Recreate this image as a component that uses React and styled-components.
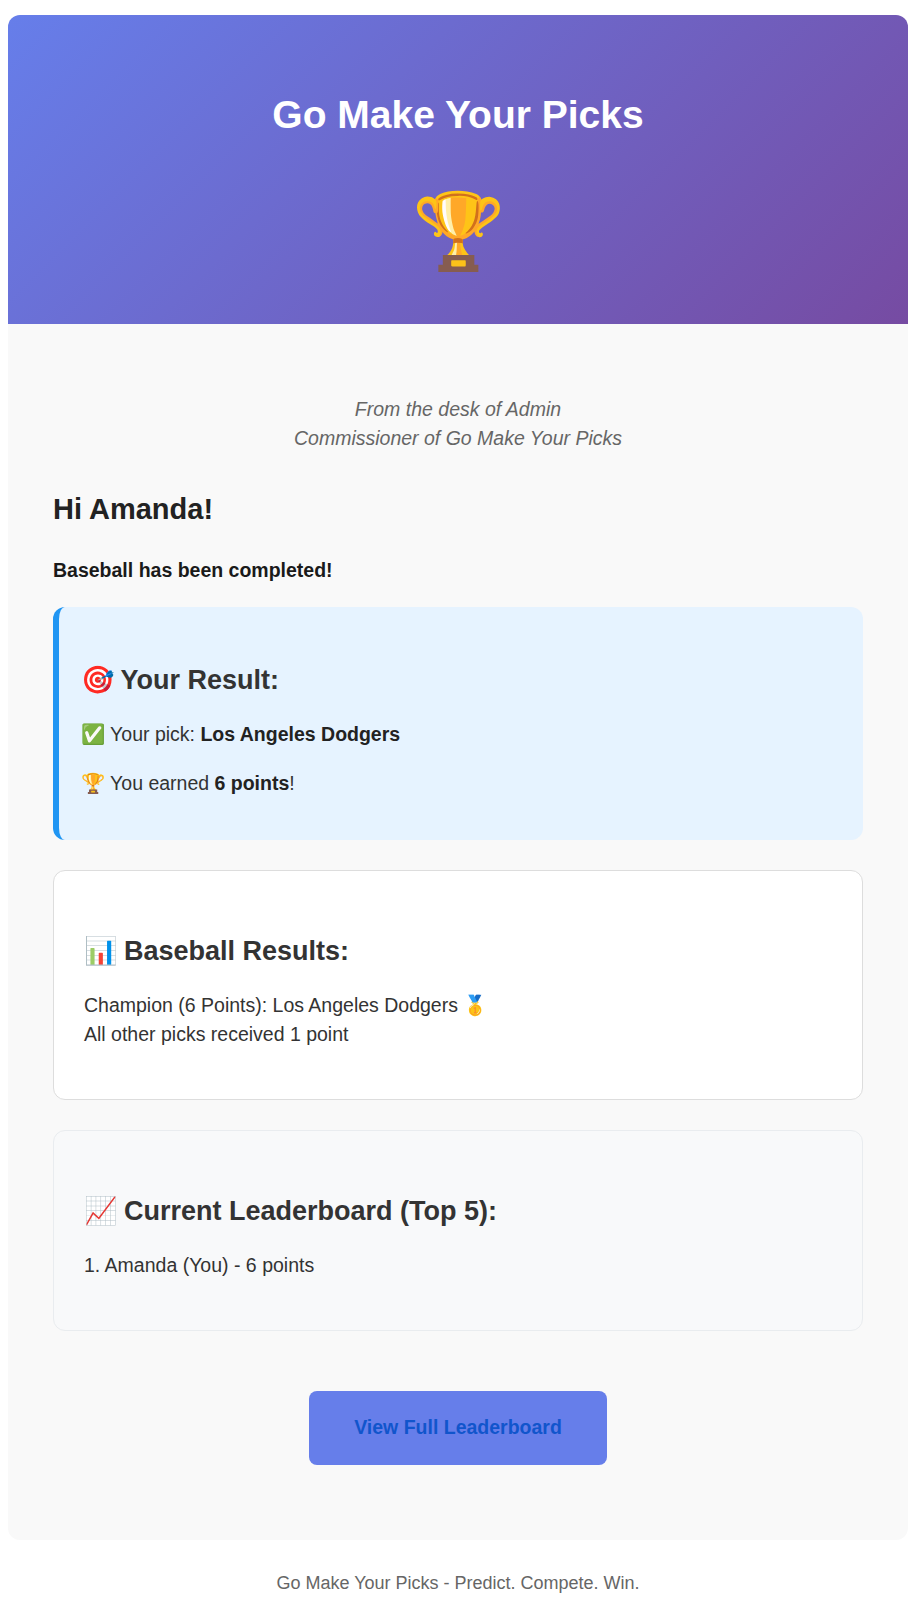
import React from "react";
import styled, { createGlobalStyle } from "styled-components";

const Global = createGlobalStyle`
  html, body { margin: 0; padding: 0; background: #fff; }
  body { font-family: "Liberation Sans", Arial, sans-serif; color: #333; line-height: 1.6; font-size: 19.5px; }
`;
const Page = styled.div`
  width: 900px;
  margin: 0 0 0 8px;
  padding: 15px 0 0;
`;
const Header = styled.header`
  height: 309px;
  box-sizing: border-box;
  padding: 40px 20px;
  border-radius: 12px 12px 0 0;
  background: linear-gradient(135deg, #667eea 0%, #764ba2 100%);
  text-align: center;
  color: #fff;
`;
const Title = styled.h1`
  margin: 36px 0 0;
  font-size: 39px;
  line-height: 47px;
  font-weight: 700;
`;
const Trophy = styled.div`
  margin-top: 48px;
  font-size: 75px;
  line-height: 90px;
`;
const Content = styled.main`
  background: #f9f9f9;
  border-radius: 0 0 12px 12px;
  padding: 71px 45px 75px;
`;
const Desk = styled.p`
  margin: 0 0 33px;
  text-align: center;
  font-style: italic;
  line-height: 29px;
  color: #666;
`;
const Greeting = styled.h2`
  margin: 0 0 22px;
  font-size: 29px;
  line-height: 46px;
  color: #222;
`;
const Lead = styled.p`
  margin: 0 0 21px;
  line-height: 32px;
  font-weight: 700;
  color: #1a1a1a;
`;
const Card = styled.section`
  margin-bottom: 30px;
  border-radius: 12px;
  padding: 30px 30px 50px;
  background: ${(p) => p.$bg};
  border: 1px solid ${(p) => p.$line};
`;
const ResultCard = styled.section`
  margin-bottom: 30px;
  border-radius: 12px;
  padding: 23px 22px 42px;
  background: #e6f3ff;
  border-left: 6px solid #2196f3;
`;
const CardTitle = styled.h3`
  margin: 29px 0 18px;
  font-size: 27px;
  line-height: 43px;
  color: #333;
`;
const TitleEmoji = styled.span`
  margin-right: -1.5px;
`;
const Line = styled.p`
  margin: 0 0 20px;
  line-height: 29px;
  color: #333;
  &:last-child { margin-bottom: 0; }
`;
const Strong = styled.strong`
  color: #222;
`;
const Actions = styled.div`
  margin-top: 60px;
  text-align: center;
`;
const Button = styled.a`
  display: inline-block;
  padding: 20px 45px 22px;
  line-height: 32px;
  background: #667eea;
  border-radius: 8px;
  color: #1155cc;
  font-weight: 700;
  text-decoration: none;
`;
const Footer = styled.footer`
  padding: 29px 0 0;
  text-align: center;
  font-size: 18px;
  color: #666;
`;

export default function App() {
  return (
    <Page>
      <Global />
      <Header>
        <Title>Go Make Your Picks</Title>
        <Trophy>🏆</Trophy>
      </Header>
      <Content>
        <Desk>From the desk of Admin<br />Commissioner of Go Make Your Picks</Desk>
        <Greeting>Hi Amanda!</Greeting>
        <Lead>Baseball has been completed!</Lead>
        <ResultCard>
          <CardTitle><TitleEmoji>🎯</TitleEmoji> Your Result:</CardTitle>
          <Line>✅ Your pick: <Strong>Los Angeles Dodgers</Strong></Line>
          <Line>🏆 You earned <Strong>6 points</Strong>!</Line>
        </ResultCard>
        <Card $bg="#fff" $line="#ddd">
          <CardTitle><TitleEmoji>📊</TitleEmoji> Baseball Results:</CardTitle>
          <Line>Champion (6 Points): Los Angeles Dodgers 🥇<br />All other picks received 1 point</Line>
        </Card>
        <Card $bg="#f8f9fa" $line="#e9ecef">
          <CardTitle><TitleEmoji>📈</TitleEmoji> Current Leaderboard (Top 5):</CardTitle>
          <Line>1. Amanda (You) - 6 points</Line>
        </Card>
        <Actions><Button href="#">View Full Leaderboard</Button></Actions>
      </Content>
      <Footer>Go Make Your Picks - Predict. Compete. Win.</Footer>
    </Page>
  );
}
